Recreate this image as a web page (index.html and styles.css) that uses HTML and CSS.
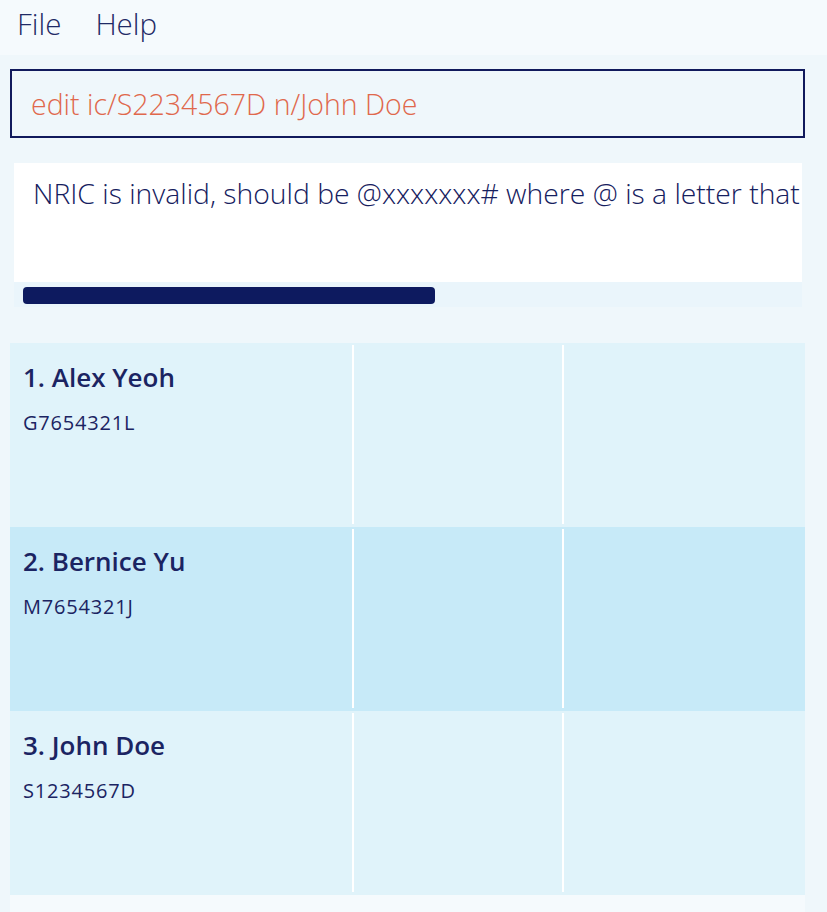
FILE: index.html
```html
<!DOCTYPE html>
<html>
<head>
<meta charset="utf-8">
<link rel="stylesheet" href="styles.css">
</head>
<body>
<div class="menubar">
  <span class="menu-item file">File</span>
  <span class="menu-item help">Help</span>
</div>
<div class="main">
  <div class="command-box">edit ic/S2234567D n/John Doe</div>
  <div class="result-pane">
    <div class="result-text">NRIC is invalid, should be @xxxxxxx# where @ is a letter that</div>
    <div class="hscroll"><div class="thumb"></div></div>
  </div>
  <div class="list">
    <div class="row">
      <div class="cell first">
        <div class="name">1. Alex Yeoh</div>
        <div class="nric">G7654321L</div>
      </div>
      <div class="divider"></div>
      <div class="cell"></div>
      <div class="divider"></div>
      <div class="cell"></div>
    </div>
    <div class="row alt">
      <div class="cell first">
        <div class="name">2. Bernice Yu</div>
        <div class="nric">M7654321J</div>
      </div>
      <div class="divider"></div>
      <div class="cell"></div>
      <div class="divider"></div>
      <div class="cell"></div>
    </div>
    <div class="row">
      <div class="cell first">
        <div class="name">3. John Doe</div>
        <div class="nric">S1234567D</div>
      </div>
      <div class="divider"></div>
      <div class="cell"></div>
      <div class="divider"></div>
      <div class="cell"></div>
    </div>
  </div>
</div>
</body>
</html>
```
FILE: styles.css
```css
* { box-sizing: border-box; }
html, body {
  margin: 0;
  padding: 0;
  height: 100%;
}
body {
  background: #eff7fb;
  font-family: "Open Sans", "Noto Sans", sans-serif;
  color: #1b2462;
  overflow: hidden;
}
.menubar {
  height: 55px;
  background: #f5fafd;
  display: flex;
  align-items: flex-start;
  padding-left: 17px;
}
.menu-item {
  font-size: 29.5px;
  font-weight: 300;
  line-height: 48px;
  color: #1f2a66;
}
.help { margin-left: 34px; }
.main {
  padding: 14px 22px 0 10px;
}
.command-box {
  height: 69px;
  border: 2px solid #111a5c;
  padding-left: 19px;
  font-size: 28.5px;
  font-weight: 300;
  line-height: 67px;
  color: #e0684c;
}
.result-pane {
  margin: 25px 3px 0 4px;
}
.result-text {
  background: #ffffff;
  height: 119px;
  padding: 10px 0 0 19px;
  font-size: 28.3px;
  font-weight: 300;
  line-height: 40px;
  white-space: nowrap;
  overflow: hidden;
  color: #15205e;
}
.hscroll {
  height: 25px;
  background: #eaf5fb;
  padding: 5px 0 0 9px;
}
.thumb {
  width: 412px;
  height: 17px;
  background: #0d1a5f;
  border-radius: 4px;
}
.list {
  margin-top: 36px;
  background: #f5fafd;
  height: 600px;
}
.row {
  height: 184px;
  background: #e0f3fa;
  display: grid;
  grid-template-columns: 342px 2px 208px 2px 1fr;
}
.row.alt { background: #c7eaf8; }
.divider {
  background: #ffffff;
  margin: 2px 0 3px 0;
}
.cell.first {
  padding: 16px 0 0 13px;
}
.name {
  font-size: 26px;
  font-weight: 600;
  line-height: 36px;
  color: #1b2462;
}
.nric {
  font-size: 20px;
  line-height: 26px;
  margin-top: 15px;
  letter-spacing: 0.8px;
  color: #1b2462;
}
```
